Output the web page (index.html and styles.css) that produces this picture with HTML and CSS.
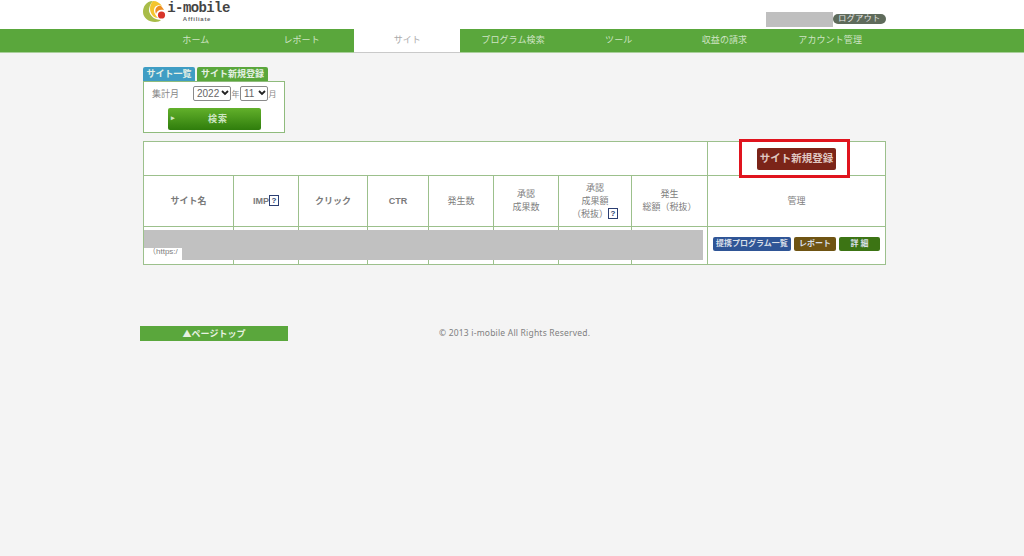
FILE: index.html
```html
<!DOCTYPE html>
<html lang="ja">
<head>
<meta charset="UTF-8">
<meta name="viewport" content="width=device-width, initial-scale=1.0">
<title>i-mobile Affiliate</title>
<link rel="stylesheet" href="styles.css">
</head>
<body>
<header class="header">
  <div class="logo">
    <svg class="logo_mark" width="24" height="22" viewBox="0 0 24 22">
      <path d="M10 0 C3 0 0 6 0 11 C0 17 6 21 12 21 C15 21 17 20 18 19 C12 19 7 15 6 10 C6 6 7 3 10 0 Z" fill="#a8bc48"/>
      <path d="M10 0 C6 4 6 11 10 15 C11 16 13 17 15 17 C11 13 10 9 12 6 C14 4 17 4 19 5 C17 2 14 0 10 0 Z" fill="#f4c52e"/>
      <path d="M18 5 C14 4 11 8 13 13 C14 10 16 8 21 9 C20 7 19 6 18 5 Z" fill="#ee8f22"/>
      <circle cx="18.5" cy="14" r="3.6" fill="#d8352a"/>
    </svg>
    <div class="logo_text">
      <span class="logo_name">i-mobile</span>
      <span class="logo_sub">Affiliate</span>
    </div>
  </div>
  <div class="user">
    <div class="user_name"></div>
    <a class="logout">ログアウト</a>
  </div>
</header>

<nav class="nav">
  <ul class="nav_list">
    <li>ホーム</li>
    <li>レポート</li>
    <li class="active">サイト</li>
    <li>プログラム検索</li>
    <li>ツール</li>
    <li>収益の請求</li>
    <li>アカウント管理</li>
  </ul>
</nav>

<main class="main">
  <div class="tabs">
    <a class="tab tab_blue">サイト一覧</a>
    <a class="tab tab_green">サイト新規登録</a>
  </div>
  <div class="search">
    <div class="search_row">
      <span class="search_label">集計月</span>
      <select class="year"><option>2022</option></select>
      <span class="unit">年</span>
      <select class="month"><option>11</option></select>
      <span class="unit">月</span>
    </div>
    <button class="search_btn"><span class="arrow">▸</span>検索</button>
  </div>

  <div class="table_wrap">
    <table class="sites">
      <colgroup>
        <col class="c1"><col class="c2"><col class="c3"><col class="c4"><col class="c5">
        <col class="c6"><col class="c7"><col class="c8"><col class="c9">
      </colgroup>
      <tr class="row_top">
        <td colspan="8"></td>
        <td><a class="btn_new">サイト新規登録</a></td>
      </tr>
      <tr class="row_head">
        <th class="strong">サイト名</th>
        <th class="strong">IMP<span class="help">?</span></th>
        <th class="strong">クリック</th>
        <th class="strong">CTR</th>
        <th>発生数</th>
        <th>承認<br>成果数</th>
        <th>承認<br>成果額<br>（税抜）<span class="help">?</span></th>
        <th>発生<br>総額（税抜）</th>
        <th>管理</th>
      </tr>
      <tr class="row_site">
        <td class="site_url">（https:/</td>
        <td></td><td></td><td></td><td></td><td></td><td></td><td></td>
        <td class="actions">
          <a class="act act_blue">提携プログラム一覧</a>
          <a class="act act_brown">レポート</a>
          <a class="act act_green">詳 細</a>
        </td>
      </tr>
    </table>
    <!-- redacted site name and the annotation frame sit on top of the table -->
    <div class="mask mask_top"></div>
    <div class="mask mask_url"></div>
    <div class="red_frame"></div>
  </div>
</main>

<footer class="footer">
  <a class="page_top">▲ページトップ</a>
  <p class="copy">© 2013 i-mobile All Rights Reserved.</p>
</footer>
</body>
</html>
```

FILE: styles.css
```css
* {
  box-sizing: border-box;
}
html, body {
  height: 100%;
}
body {
  margin: 0;
  background: #f4f4f4;
  color: #666;
  font-family: "Liberation Sans", "Noto Sans CJK JP", sans-serif;
  font-size: 9px;
  overflow: hidden;
}
ul {
  list-style: none;
  margin: 0;
  padding: 0;
}

/* header */
.header {
  height: 29px;
  background: #fff;
  padding-left: 143px;
  width: 100%;
  display: flex;
  justify-content: space-between;
  padding-right: 138px;
}
.logo {
  display: flex;
}
.logo_mark {
  margin-top: 1px;
}
.logo_text {
  display: flex;
  flex-direction: column;
  align-items: center;
  width: 63px;
}
.logo_name {
  font-family: "Liberation Mono", monospace;
  font-weight: bold;
  font-size: 14px;
  letter-spacing: -0.6px;
  line-height: 15px;
  color: #444;
  margin-top: 1px;
}
.logo_sub {
  font-size: 6px;
  font-weight: bold;
  line-height: 7px;
  letter-spacing: 0.7px;
  color: #666;
  margin-left: -3px;
}
.user {
  display: flex;
  align-items: flex-start;
  padding-top: 12px;
}
.user_name {
  width: 67px;
  height: 15px;
  background: #bfbfbf;
}
.logout {
  width: 53px;
  height: 10px;
  margin-top: 2px;
  border-radius: 5px;
  background: #5f6b5b;
  color: #e8e8e8;
  font-size: 8px;
  line-height: 10px;
  text-align: center;
  letter-spacing: 0.5px;
}

/* nav */
.nav {
  height: 24px;
  background: #5aa73c;
  border-bottom: 1px solid #a9cf9a;
}
.nav_list {
  display: flex;
  margin-left: 143px;
  width: 740px;
}
.nav_list li {
  flex: 1;
  height: 23px;
  line-height: 22px;
  text-align: center;
  color: #cfe4c4;
  font-size: 9px;
  letter-spacing: 0.1px;
}
.nav_list li.active {
  height: 24px;
  background: #fff;
  color: #aaa;
  border-bottom: 1px solid #c9c9c9;
}

/* main */
.main {
  margin-left: 143px;
  width: 743px;
  padding-top: 14px;
}
.tabs {
  display: flex;
  gap: 2px;
}
.tab {
  height: 14px;
  line-height: 14px;
  text-align: center;
  color: #e4f0e4;
  font-size: 9px;
  font-weight: bold;
  border-radius: 2px 2px 0 0;
}
.tab_blue {
  width: 52px;
  background: #3f9dc4;
}
.tab_green {
  width: 71px;
  background: #5aa73c;
}
.search {
  width: 142px;
  height: 52px;
  background: #fff;
  border: 1px solid #8fbb7c;
  padding-top: 3px;
}
.search_row {
  display: flex;
  align-items: center;
  height: 16px;
}
.search_label {
  width: 49px;
  padding-left: 8px;
  color: #888;
  font-size: 9px;
}
.search_row select {
  appearance: none;
  height: 15px;
  padding: 0 0 0 3px;
  font-family: "Liberation Sans", sans-serif;
  font-size: 10px;
  color: #666;
  border: 1px solid #8a8a8a;
  border-radius: 2px;
  background: #fff url("data:image/svg+xml,%3Csvg xmlns='http://www.w3.org/2000/svg' width='8' height='6'%3E%3Cpath d='M1 1l3 3 3-3' fill='none' stroke='%23222' stroke-width='1.8'/%3E%3C/svg%3E") no-repeat right 1px center;
}
.year {
  width: 38px;
}
.month {
  width: 28px;
}
.unit {
  width: 9px;
  text-align: center;
  color: #888;
  font-size: 8px;
}
.search_btn {
  position: relative;
  display: block;
  width: 93px;
  height: 22px;
  margin: 7px 0 0 24px;
  padding: 0 0 2px 7px;
  border: 0;
  border-radius: 2px;
  background: linear-gradient(#62b02b, #2f7d0c);
  color: #cfe6c4;
  font-family: inherit;
  font-size: 9px;
  font-weight: bold;
  letter-spacing: 1px;
}
.arrow {
  position: absolute;
  left: 3px;
  top: 6px;
  font-size: 7px;
  line-height: 8px;
}

/* table */
.table_wrap {
  position: relative;
  margin-top: 8px;
}
.sites {
  width: 742px;
  table-layout: fixed;
  border-collapse: collapse;
  background: #fff;
}
.sites td, .sites th {
  border: 1px solid #9cc08c;
  padding: 0;
  text-align: center;
  font-size: 9px;
  font-weight: normal;
  line-height: 13px;
  color: #808080;
}
.sites th.strong {
  font-weight: bold;
  color: #7a7a7a;
}
.c1 { width: 90px; }
.c2 { width: 65px; }
.c3 { width: 69px; }
.c4 { width: 61px; }
.c5 { width: 65px; }
.c6 { width: 65px; }
.c7 { width: 73px; }
.c8 { width: 76px; }
.c9 { width: 178px; }
.row_top {
  height: 34px;
}
.row_head {
  height: 51px;
}
.row_site {
  height: 38px;
}
.help {
  display: inline-block;
  width: 10px;
  height: 11px;
  border: 1px solid #2c3f73;
  color: #2c3f73;
  background: #fff;
  font-size: 8px;
  font-weight: bold;
  line-height: 9px;
  text-align: center;
  vertical-align: 1px;
}
.btn_new {
  display: inline-block;
  width: 79px;
  height: 22px;
  line-height: 21px;
  border-radius: 2px;
  background: #7b2418;
  color: #e0c8c2;
  font-size: 10.5px;
  font-weight: bold;
  vertical-align: middle;
}
.sites td.site_url {
  text-align: left;
  vertical-align: bottom;
  padding: 0 0 6px 4px;
  font-size: 8px;
  line-height: 12px;
  white-space: nowrap;
}
.sites td.actions {
  padding: 0 0 3px 5px;
  text-align: left;
  white-space: nowrap;
  font-size: 0;
}
.act {
  display: inline-block;
  height: 14px;
  line-height: 14px;
  margin-right: 3px;
  border-radius: 2px;
  text-align: center;
  color: #d8dfe8;
  font-size: 8px;
  font-weight: bold;
  vertical-align: middle;
}
.act_blue {
  width: 78px;
  background: #2f5596;
}
.act_brown {
  width: 42px;
  background: #6f5413;
}
.act_green {
  width: 41px;
  margin-right: 0;
  background: #3c7414;
}
.mask {
  position: absolute;
  background: #c1c1c1;
}
.mask_top {
  left: 1px;
  top: 89px;
  width: 559px;
  height: 18px;
}
.mask_url {
  left: 39px;
  top: 107px;
  width: 521px;
  height: 12px;
}
.red_frame {
  position: absolute;
  left: 596px;
  top: -2px;
  width: 111px;
  height: 39px;
  border: 3px solid #e0141e;
}

/* footer */
.footer {
  display: flex;
  align-items: center;
  margin: 61px 0 0 140px;
}
.page_top {
  width: 148px;
  height: 15px;
  line-height: 15px;
  background: #5aa73c;
  color: #e8f2e2;
  font-family: "Noto Sans CJK JP", sans-serif;
  font-size: 9px;
  font-weight: bold;
  text-align: center;
}
.copy {
  margin: 0 0 3px 151px;
  font-family: "Noto Sans", sans-serif;
  font-size: 8.5px;
  letter-spacing: 0.2px;
  color: #808080;
}
```
